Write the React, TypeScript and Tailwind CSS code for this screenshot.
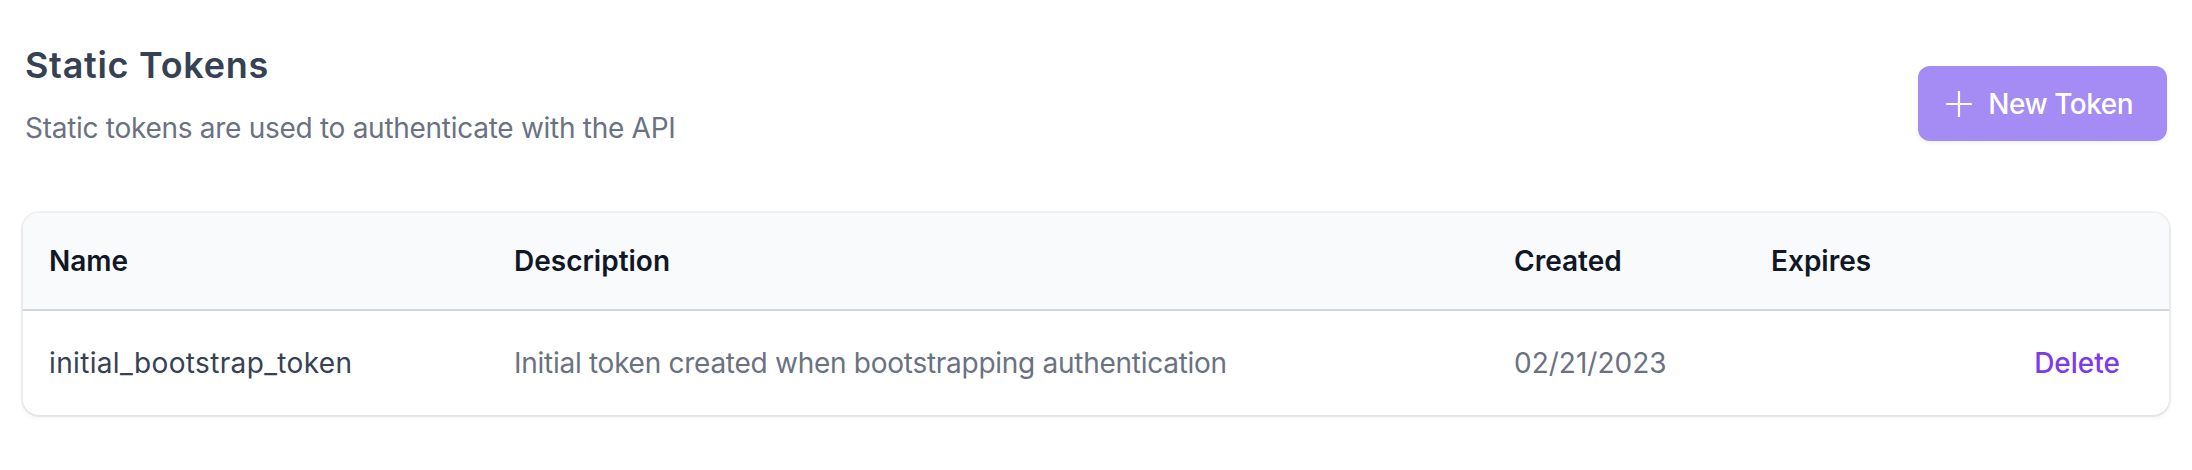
import React from 'react';

interface Token {
  name: string;
  description: string;
  createdAt: string;
  expiresAt: string;
}

const tokens: Token[] = [
  {
    name: 'initial_bootstrap_token',
    description: 'Initial token created when bootstrapping authentication',
    createdAt: '02/21/2023',
    expiresAt: '',
  },
];

const PlusIcon = () => (
  <svg width="26" height="26" viewBox="0 0 26 26" fill="none" aria-hidden="true">
    <path d="M13 1v24M1 13h24" stroke="currentColor" strokeWidth="2.2" strokeLinecap="round" />
  </svg>
);

const cols = 'grid grid-cols-[465px_1000px_257px_1fr_auto]';

export default function App() {
  return (
    <div
      className="min-h-screen bg-white px-[25px] pt-[37px] pb-10"
      style={{ fontFamily: 'Inter, "Noto Sans", "Liberation Sans", sans-serif' }}
    >
      {/* Header */}
      <div className="flex justify-between items-start">
        <div>
          <h1 className="text-[36px] leading-[56px] font-semibold text-gray-700 tracking-[0.7px]">
            Static Tokens
          </h1>
          <p className="mt-[15px] text-[28px] leading-[40px] text-gray-500 tracking-[-0.28px]">
            Static tokens are used to authenticate with the API
          </p>
        </div>
        <button
          type="button"
          className="mt-[29px] h-[75px] flex items-center gap-[16px] pl-[28px] pr-[34px] rounded-[12px] bg-[#a48cf4] text-white text-[28px] leading-[40px] font-medium tracking-[-0.5px] shadow-[0_2px_4px_rgba(0,0,0,0.06)]"
        >
          <PlusIcon />
          New Token
        </button>
      </div>

      {/* Tokens table */}
      <div className="mt-[65px] -mx-[2px] rounded-[16px] overflow-hidden bg-white shadow-[0_0_0_2px_rgba(0,0,0,0.05),0_2px_5px_rgba(0,0,0,0.08)]">
        <div className={`${cols} bg-gray-50 border-b-2 border-gray-300 text-[28px] leading-[40px] font-semibold text-gray-900`}>
          <div className="pl-[26px] py-[28px]">Name</div>
          <div className="pl-[26px] py-[28px]">Description</div>
          <div className="pl-[26px] py-[28px]">Created</div>
          <div className="pl-[26px] py-[28px]">Expires</div>
          <div className="pr-[49px] py-[28px]" />
        </div>
        {tokens.map((token) => (
          <div key={token.name} className={`${cols} text-[28px] leading-[40px]`}>
            <div className="pl-[26px] py-[32px] text-gray-700 whitespace-nowrap tracking-[0.35px]">
              {token.name}
            </div>
            <div className="pl-[26px] py-[32px] text-gray-500 whitespace-nowrap tracking-[-0.27px]">
              {token.description}
            </div>
            <div className="pl-[26px] py-[32px] text-gray-500">{token.createdAt}</div>
            <div className="pl-[26px] py-[32px] text-gray-500">{token.expiresAt}</div>
            <div className="pr-[49px] py-[32px] text-right">
              <button type="button" className="font-medium text-[#7c3aed]">
                Delete
              </button>
            </div>
          </div>
        ))}
      </div>
    </div>
  );
}
